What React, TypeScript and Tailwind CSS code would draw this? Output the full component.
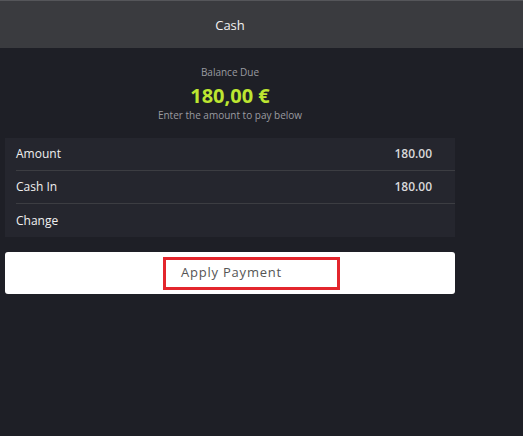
import React from "react";

const rows = [
  { label: "Amount", value: "180.00" },
  { label: "Cash In", value: "180.00" },
  { label: "Change", value: "" },
];

const App: React.FC = () => {
  return (
    <div
      className="w-[523px] h-[436px] bg-[#1e1f26] text-white"
      style={{ fontFamily: '"Open Sans", "Noto Sans", sans-serif' }}
    >
      <div className="h-[48px] bg-[#3a3b3f] border-t border-[#55565a]">
        <div className="w-[460px] h-full flex items-center justify-center pt-[2px] text-[13px] text-[#f2f2f2]">
          Cash
        </div>
      </div>
      <div className="w-[460px] px-[5px]">
        <div className="flex flex-col items-center pt-[17px]">
          <div className="text-[10px] leading-[14px] text-[#9a9ba0]">Balance Due</div>
          <div className="text-[20px] leading-[24px] font-bold text-[#bde631] mt-[5px]">
            180,00 €
          </div>
          <div className="text-[10px] leading-[14px] text-[#9a9ba0]">
            Enter the amount to pay below
          </div>
        </div>
        <div className="mt-[16px] bg-[#25262e] w-[450px]">
          {rows.map((row, idx) => (
            <div key={row.label} className="pl-[11px]">
              <div
                className={
                  "h-[33px] flex items-center justify-between pr-[23px] text-[12px] " +
                  (idx < rows.length - 1 ? "border-b border-[#3c3d42]" : "")
                }
              >
                <span className="text-[#f0f0f0]">{row.label}</span>
                <span className="text-[#d8d8da] font-semibold">{row.value}</span>
              </div>
            </div>
          ))}
        </div>
        <div className="mt-[15px] w-[450px] h-[42px] bg-white rounded-[3px] flex items-center pl-[158px]">
          <div className="w-[177px] h-[33px] border-[3px] border-[#e3262d] flex items-center pl-[15px] text-[13px] tracking-[0.06em] text-[#555]">
            Apply Payment
          </div>
        </div>
      </div>
    </div>
  );
};

export default App;
